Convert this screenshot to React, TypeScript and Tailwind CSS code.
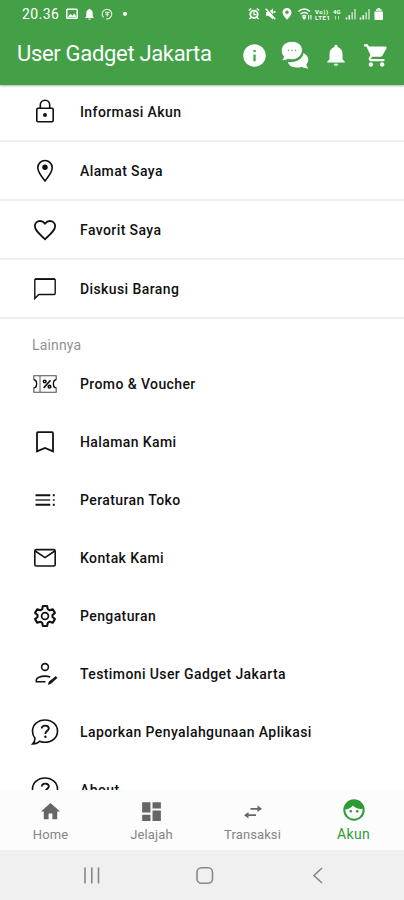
import type { ReactNode } from 'react';
import {
  MdDashboard,
  MdHome,
  MdInfo,
  MdNotifications,
  MdShoppingCart
} from 'react-icons/md';

interface MenuItem {
  label: string;
  icon: ReactNode;
}

function LineIcon({ children }: { children: ReactNode }) {
  return (
    <svg width="26" height="26" viewBox="0 0 26 26" fill="none" stroke="currentColor" strokeWidth="1.6">
      {children}
    </svg>
  );
}

function LockIcon() {
  return (
    <LineIcon>
      <rect x="4.8" y="9.3" width="16.4" height="13.4" rx="1.2" />
      <path d="M8.3 9V6a4.7 4.7 0 0 1 9.4 0v3" />
      <circle cx="13" cy="16" r="2" fill="currentColor" stroke="none" />
    </LineIcon>
  );
}

function PinIcon() {
  return (
    <LineIcon>
      <path d="M13 23C10 19 5.8 14.3 5.8 9.7a7.2 7.2 0 0 1 14.4 0C20.2 14.3 16 19 13 23z" />
      <circle cx="13" cy="9.3" r="2.7" fill="currentColor" stroke="none" />
    </LineIcon>
  );
}

function HeartIcon() {
  return (
    <LineIcon>
      <path
        d="M13 22.2l-1.5-1.4C6 15.8 2.9 13 2.9 9.3 2.9 6.2 5.3 4 8.1 4c1.9 0 3.7 1 4.9 2.6C14.2 5 16 4 17.9 4c2.8 0 5.2 2.2 5.2 5.3 0 3.7-3.1 6.5-8.6 11.5z"
        strokeWidth="1.8"
      />
    </LineIcon>
  );
}

function ChatIcon() {
  return (
    <LineIcon>
      <path d="M2.8 22.5V3.9a1 1 0 0 1 1-1h18.4a1 1 0 0 1 1 1v13.6a1 1 0 0 1-1 1H6.8z" strokeWidth="1.4" />
      <path d="M3 3.2h20" />
    </LineIcon>
  );
}

function VoucherIcon() {
  return (
    <LineIcon>
      <path
        d="M1.8 4.8h22.4v4c-2.2 0-2.8 1.4-2.8 4s.6 4 2.8 4v4.4H1.8v-4.4c2.2 0 2.8-1.4 2.8-4s-.6-4-2.8-4z"
        strokeWidth="1.1"
        opacity="0.75"
      />
      <path d="M2 8.8c2 0 2.6 1.4 2.6 4s-.6 4-2.6 4M24 8.8c-2 0-2.6 1.4-2.6 4s.6 4 2.6 4" strokeWidth="1.3" />
      <path d="M8 5v16" strokeWidth="1" opacity="0.7" />
      <path d="M18.5 9.3l-6.8 7.6" strokeWidth="1.7" />
      <circle cx="12.7" cy="10.5" r="1.3" />
      <circle cx="17.5" cy="15.7" r="1.3" />
    </LineIcon>
  );
}

function BookmarkIcon() {
  return (
    <LineIcon>
      <path d="M5 22.4V4.2a1 1 0 0 1 1-1h14a1 1 0 0 1 1 1v18.2l-8-3.5z" strokeWidth="1.8" />
    </LineIcon>
  );
}

function RulesIcon() {
  return (
    <LineIcon>
      <path d="M3.5 8.3h14.8M3.5 17.7h14.8M20.8 8.3h2M20.8 17.7h2" strokeWidth="2" />
      <path d="M3.5 13h14.8M20.8 13h2" strokeWidth="2.2" opacity="0.65" />
    </LineIcon>
  );
}

function MailIcon() {
  return (
    <LineIcon>
      <rect x="2.8" y="4.6" width="20.4" height="16.4" rx="1.6" />
      <path d="M3.2 6l9.8 6.6L22.8 6" />
    </LineIcon>
  );
}

function GearIcon() {
  return (
    <LineIcon>
      <path
        d="M10.9 3h4.2l.7 3.2 1.9 1.1 3.1-1 2.1 3.6-2.4 2.2v1.8l2.4 2.2-2.1 3.6-3.1-1-1.9 1.1-.7 3.2h-4.2l-.7-3.2-1.9-1.1-3.1 1-2.1-3.6 2.4-2.2v-1.8L3.1 9.9l2.1-3.6 3.1 1 1.9-1.1z"
        strokeWidth="2.1"
        strokeLinejoin="round"
      />
      <circle cx="13" cy="13" r="3.4" strokeWidth="1.7" />
    </LineIcon>
  );
}

function TestimonialIcon() {
  return (
    <LineIcon>
      <circle cx="13" cy="6" r="3.4" />
      <path d="M13.5 20.7H4.3v-1.6c0-2.5 4.2-4 8.7-4 2 0 3.6.3 5.2.9" />
      <path d="M16.3 23.4l.9-2.6 6.6-5.4 1.3 1.3-6 5.6-2.8 1.1z" fill="currentColor" strokeWidth="0.7" />
    </LineIcon>
  );
}

function HelpIcon() {
  return (
    <svg width="28" height="28" viewBox="0 0 28 28" fill="none" stroke="currentColor" strokeWidth="1.6">
      <path d="M4 20.2C2.4 18.4 1.5 16 1.5 13.3 1.5 6.8 7 2 14 2s12.5 4.8 12.5 11.2S21 24.3 14 24.3c-2 0-3.7-.4-5.3-1.1-1.7 1.8-4 2.6-7 2.7C3.2 24.5 4 22.5 4 20.2z" />
      <path d="M10.8 10.5c0-3.9 7-3.7 7 0 0 2.5-3.4 2.2-3.4 5.5" strokeWidth="1.9" />
      <circle cx="14.4" cy="18.7" r="1.2" fill="currentColor" stroke="none" />
    </svg>
  );
}

function ChatsIcon() {
  return (
    <svg width="28" height="28" viewBox="0 0 28 28" fill="white">
      <path d="M13.5 26.3c-3.5 0-5.8-2.2-6.5-5.2 8 .8 15-3.3 15.4-9.2 5.5 2.7 6.2 7.7 3 11.5.2 1.6.8 2.6 2 4.1-2.2.1-4.5-.3-6-1.4-2.4.6-5.1.6-7.9.2z" />
      <path
        d="M11 .3C17 .3 21.4 4 21.4 9S17 18.8 11 18.8c-1.5 0-2.8-.2-4-.6-1.8 1.2-4 1.6-6.8 1.4 1.5-1.3 2.2-2.7 2.3-4.2C.7 13.6.3 11.6.3 9.4.3 4.2 5 .3 11 .3z"
        stroke="#43a047"
        strokeWidth="1"
      />
      <g fill="#43a047" opacity="0.75">
        <circle cx="7.5" cy="9.4" r="0.8" />
        <circle cx="11" cy="9.4" r="0.8" />
        <circle cx="14.5" cy="9.4" r="0.8" />
      </g>
    </svg>
  );
}

function SwapIcon() {
  return (
    <svg width="20" height="14" viewBox="0 0 20 14" fill="none" stroke="#666" strokeWidth="1.8">
      <path d="M7.5 3.8h9M13 10.2H3" />
      <path d="M14.5.5L19 3.8l-4.5 3.3zM5.5 6.9L1 10.2l4.5 3.3z" fill="#666" stroke="none" />
    </svg>
  );
}

function FaceIcon() {
  return (
    <svg width="24" height="24" viewBox="0 0 24 24" fill="currentColor">
      <circle cx="12" cy="12" r="9.7" fill="none" stroke="currentColor" strokeWidth="2" />
      <path d="M2.5 11.6C2.9 6 7 2 12 2s9.2 4 9.5 8.8c-4.7.6-8.3-.6-10.6-3.3C9.3 9.6 6.3 11.3 2.5 11.6z" />
      <circle cx="8.8" cy="13.2" r="1.3" />
      <circle cx="15.2" cy="13.2" r="1.3" />
    </svg>
  );
}

function StatusIcons() {
  return (
    <svg width="138" height="16" viewBox="0 0 138 16" fill="none" stroke="white" strokeWidth="1.3">
      {/* alarm */}
      <circle cx="6" cy="8.3" r="3.7" strokeWidth="1.9" />
      <path d="M6 6v2.6h2.2M.7 4.4l2.6-2M8.7 2.4l2.6 2M2.8 11.5l-1.3 1.6M9.2 11.5l1.3 1.6" />
      {/* muted */}
      <path d="M18 6h2.5L25 2.5v11l-4.5-3.7H18z" fill="white" stroke="none" />
      <path d="M18.5 2.3l10 10.5" stroke="#43a047" strokeWidth="1.2" />
      <path d="M17.7 2.8l9.5 10.5M25.5 6.5l2-1" strokeWidth="1.5" />
      {/* location */}
      <path d="M39 13.8C37 11 34.5 9 34.5 6.4a4.5 4.5 0 0 1 9 0C43.5 9 41 11 39 13.8z" fill="white" stroke="none" />
      <circle cx="39" cy="6.3" r="1.7" fill="#43a047" stroke="none" />
      {/* wifi */}
      <path d="M50.5 5.5c3.5-3.2 8-3.2 11.5 0M52.6 8c2.5-2 5-2 7.3 0M54.4 10.3c1.3-1 2.3-1 3.6 0" strokeWidth="1.5" />
      <path d="M56.2 13.5l-1.5-2h3zM60.7 9v4.5M63 9v4.5" fill="white" strokeWidth="1" />
      {/* carrier labels */}
      <g fill="white" stroke="none" fontFamily="Roboto, sans-serif" fontWeight="700">
        <text x="67" y="7.5" fontSize="6" textLength="13">Vo))</text>
        <text x="67" y="14" fontSize="6" textLength="15">LTE1</text>
        <text x="85" y="7.5" fontSize="6">4G</text>
      </g>
      <path d="M87.5 10v3.5M90.5 10v3.5" strokeWidth="1" opacity="0.6" />
      {/* signal bars */}
      <g strokeWidth="1.6">
        <path d="M98.5 13.5v-2M101.3 13.5V9.2" />
        <path d="M104.2 13.5V6.3M107 13.5V3" opacity="0.65" />
        <path d="M112.5 13.5v-2M115.3 13.5V9.2" />
        <path d="M118.2 13.5V6.3M121 13.5V3" opacity="0.65" />
      </g>
      {/* battery */}
      <path d="M126.5 5.5h8.5v7.6a.9.9 0 0 1-.9.9h-6.7a.9.9 0 0 1-.9-.9z" fill="white" stroke="none" />
      <path d="M128 5V3.2h1.3V2h3v1.2h1.3V5" fill="white" stroke="none" opacity="0.8" />
    </svg>
  );
}

const accountItems: MenuItem[] = [
  { label: 'Informasi Akun', icon: <LockIcon /> },
  { label: 'Alamat Saya', icon: <PinIcon /> },
  { label: 'Favorit Saya', icon: <HeartIcon /> },
  { label: 'Diskusi Barang', icon: <ChatIcon /> }
];

const otherItems: MenuItem[] = [
  { label: 'Promo & Voucher', icon: <VoucherIcon /> },
  { label: 'Halaman Kami', icon: <BookmarkIcon /> },
  { label: 'Peraturan Toko', icon: <RulesIcon /> },
  { label: 'Kontak Kami', icon: <MailIcon /> },
  { label: 'Pengaturan', icon: <GearIcon /> },
  { label: 'Testimoni User Gadget Jakarta', icon: <TestimonialIcon /> },
  { label: 'Laporkan Penyalahgunaan Aplikasi', icon: <HelpIcon /> },
  { label: 'About', icon: <HelpIcon /> }
];

function MenuRow({ item, className }: { item: MenuItem; className: string }) {
  return (
    <div className={`flex shrink-0 items-center pl-[31px] text-[#111] ${className}`}>
      <span className="flex w-7 justify-center">{item.icon}</span>
      <span className="ml-[21px] text-sm font-medium tracking-[0.4px] whitespace-nowrap">{item.label}</span>
    </div>
  );
}

export default function App() {
  return (
    <div className="flex h-[900px] w-[404px] flex-col overflow-hidden bg-white font-['Roboto',sans-serif]">
      <header className="z-10 h-[85px] shrink-0 bg-[#43a047] text-white shadow-[0_1px_2px_rgba(0,0,0,0.3)]">
        <div className="flex h-[27px] items-center pl-[22px]">
          <span className="w-[44px] text-sm tracking-[0.4px]">20.36</span>
          <svg width="64" height="14" viewBox="0 0 64 14" fill="none" stroke="white">
            <rect x="0.8" y="2.2" width="10.4" height="9" rx="0.8" strokeWidth="1.5" />
            <path d="M2 10l2.4-3.3 2 2 2-2.2L10.5 10z" fill="white" stroke="none" />
            <path d="M19 11h9l-1.3-1.8V6.4c0-2-1-3.5-2.4-3.9a.8.8 0 0 0-1.6 0c-1.5.4-2.4 1.9-2.4 3.9v2.8zM22.3 11.6h2.4a1.2 1.2 0 0 1-2.4 0z" fill="white" stroke="none" />
            <g opacity="0.8">
              <path d="M37.5 10.4a4.8 4.8 0 1 1 2.6 1.4" strokeWidth="1.2" />
              <path d="M39 5.3h4.5M41.2 5v4.5M39.5 7.3h3.4" strokeWidth="1.2" />
            </g>
            <circle cx="59" cy="6.8" r="2.1" fill="white" stroke="none" />
          </svg>
          <span className="ml-[118px]">
            <StatusIcons />
          </span>
        </div>
        <div className="flex h-[56px] items-center pl-[17px]">
          <h1 className="w-[224px] -translate-y-0.5 text-[22px] tracking-[-0.32px] whitespace-nowrap">User Gadget Jakarta</h1>
          <MdInfo size={27} />
          <span className="ml-[13px] pb-px">
            <ChatsIcon />
          </span>
          <MdNotifications size={26} className="ml-[14px]" />
          <MdShoppingCart size={27} className="ml-[14px]" />
        </div>
      </header>

      <main className="flex min-h-0 flex-1 flex-col overflow-hidden">
        {accountItems.map((item, i) => (
          <MenuRow
            key={item.label}
            item={item}
            className={`border-b-2 border-[#eeeeee] ${i === 0 ? 'h-[57px] pb-px' : 'h-[59px]'}`}
          />
        ))}
        <h2 className="flex h-[36px] shrink-0 items-end pl-8 text-sm tracking-[0.15px] text-[#929292]">Lainnya</h2>
        <div className="flex flex-col">
          {otherItems.map((item) => (
            <MenuRow key={item.label} item={item} className="h-[58px]" />
          ))}
        </div>
      </main>

      <nav className="grid h-[60px] shrink-0 grid-cols-4 bg-[#fcfcfc] text-[13px] text-[#858585]">
        <div className="flex flex-col items-center">
          <span className="flex h-[35px] items-center pt-[8px]">
            <MdHome size={23} color="#666" />
          </span>
          <span className="tracking-[0.1px]">Home</span>
        </div>
        <div className="flex flex-col items-center">
          <span className="flex h-[35px] items-center pt-[8px]">
            <MdDashboard size={25} color="#666" />
          </span>
          <span className="tracking-[0.1px]">Jelajah</span>
        </div>
        <div className="flex flex-col items-center">
          <span className="flex h-[35px] items-center pt-[9px]">
            <SwapIcon />
          </span>
          <span className="tracking-[0.1px]">Transaksi</span>
        </div>
        <div className="flex flex-col items-center text-[#2e9b35]">
          <span className="flex h-[34px] items-center pt-[6px]">
            <FaceIcon />
          </span>
          <span className="text-sm tracking-[0.3px]">Akun</span>
        </div>
      </nav>

      <footer className="flex h-[50px] shrink-0 items-center bg-[#f0f0f0]">
        <svg width="404" height="50" viewBox="0 0 404 50" fill="none" stroke="#888" strokeWidth="1.6">
          <path d="M85 17.5v16M91.8 17.5v16M98.5 17.5v16" />
          <rect x="197" y="17.8" width="15.5" height="15.5" rx="4.5" />
          <path d="M322 18l-8 7.5 8 7.5" />
        </svg>
      </footer>
    </div>
  );
}
